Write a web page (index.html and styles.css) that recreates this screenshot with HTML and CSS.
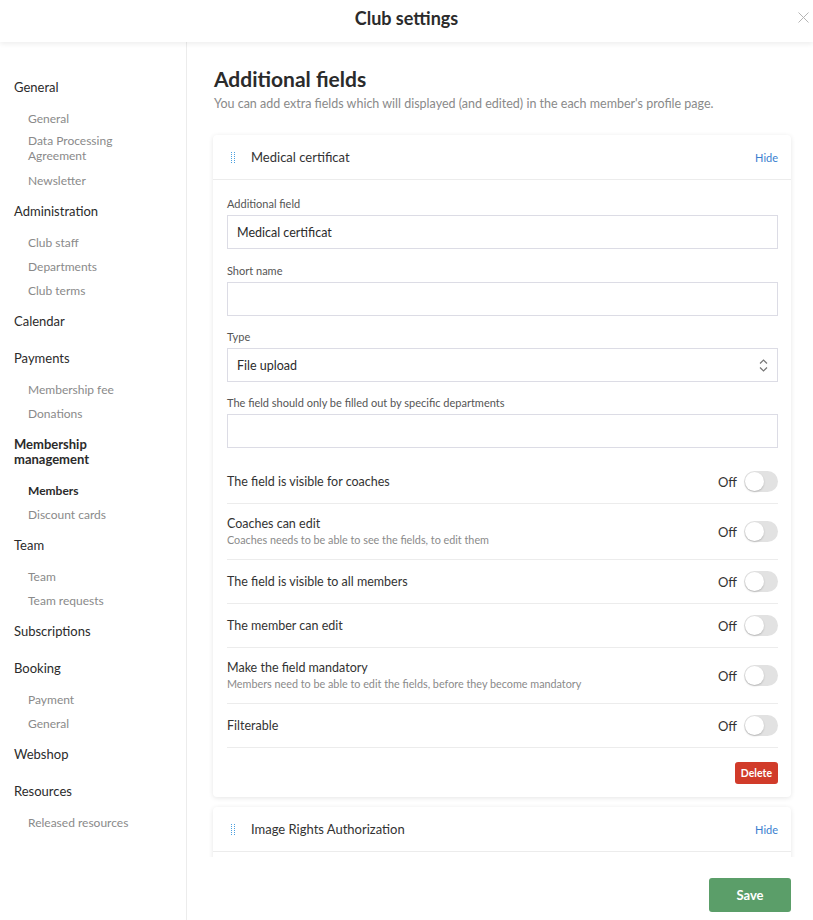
FILE: index.html
```html
<!DOCTYPE html>
<html lang="en">
<head>
    <meta charset="UTF-8">
    <meta name="viewport" content="width=device-width, initial-scale=1.0">
    <title>Club settings</title>
    <link rel="stylesheet" href="styles.css">
</head>
<body>

    <div class="modal-header">
        <div class="modal-title">Club settings</div>
        <span class="modal-close">
            <svg width="11" height="11" viewBox="0 0 11 11"><path d="M0.5 0.5 L10.5 10.5 M10.5 0.5 L0.5 10.5" stroke="#b5b5b5" stroke-width="1"/></svg>
        </span>
    </div>

    <div class="modal-body">

        <!-- left menu -->
        <div class="sidebar">
            <div class="menu-group">
                <div class="menu-heading">General</div>
                <div class="menu-list">
                    <div class="menu-item">General</div>
                    <div class="menu-item wrapped">Data Processing<br>Agreement</div>
                    <div class="menu-item">Newsletter</div>
                </div>
            </div>
            <div class="menu-group">
                <div class="menu-heading">Administration</div>
                <div class="menu-list">
                    <div class="menu-item">Club staff</div>
                    <div class="menu-item">Departments</div>
                    <div class="menu-item">Club terms</div>
                </div>
            </div>
            <div class="menu-group">
                <div class="menu-heading">Calendar</div>
            </div>
            <div class="menu-group">
                <div class="menu-heading">Payments</div>
                <div class="menu-list">
                    <div class="menu-item">Membership fee</div>
                    <div class="menu-item">Donations</div>
                </div>
            </div>
            <div class="menu-group">
                <div class="menu-heading active">Membership<br>management</div>
                <div class="menu-list">
                    <div class="menu-item active">Members</div>
                    <div class="menu-item">Discount cards</div>
                </div>
            </div>
            <div class="menu-group">
                <div class="menu-heading">Team</div>
                <div class="menu-list">
                    <div class="menu-item">Team</div>
                    <div class="menu-item">Team requests</div>
                </div>
            </div>
            <div class="menu-group">
                <div class="menu-heading">Subscriptions</div>
            </div>
            <div class="menu-group">
                <div class="menu-heading">Booking</div>
                <div class="menu-list">
                    <div class="menu-item">Payment</div>
                    <div class="menu-item">General</div>
                </div>
            </div>
            <div class="menu-group">
                <div class="menu-heading">Webshop</div>
            </div>
            <div class="menu-group">
                <div class="menu-heading">Resources</div>
                <div class="menu-list">
                    <div class="menu-item">Released resources</div>
                </div>
            </div>
        </div>

        <div class="main">
            <div class="main-scroll">
                <h1 class="page-title">Additional fields</h1>
                <div class="page-desc">You can add extra fields which will displayed (and edited) in the each member's profile page.</div>

                <div class="field-card">
                    <div class="card-header">
                        <span class="drag-handle">
                            <svg width="4" height="11" viewBox="0 0 4 11">
                                <path d="M0.5 0 V11 M3.5 0 V11" stroke="#4aa0e0" stroke-width="1" stroke-dasharray="1 1"/>
                            </svg>
                        </span>
                        <span class="card-title">Medical certificat</span>
                        <a class="hide-link">Hide</a>
                    </div>
                    <div class="card-body">
                        <div class="form-group first">
                            <label>Additional field</label>
                            <div class="text-input">Medical certificat</div>
                        </div>
                        <div class="form-group">
                            <label>Short name</label>
                            <div class="text-input"></div>
                        </div>
                        <div class="form-group">
                            <label>Type</label>
                            <div class="text-input select-input">
                                File upload
                                <svg width="9" height="13" viewBox="0 0 9 13"><path d="M1 4.5 L4.5 1 L8 4.5 M1 8.5 L4.5 12 L8 8.5" fill="none" stroke="#777" stroke-width="1.2"/></svg>
                            </div>
                        </div>
                        <div class="form-group last">
                            <label>The field should only be filled out by specific departments</label>
                            <div class="text-input"></div>
                        </div>

                        <div class="switch-row">
                            <div class="switch-text">
                                <div class="switch-label">The field is visible for coaches</div>
                            </div>
                            <span class="switch-state">Off</span>
                            <span class="toggle"></span>
                        </div>
                        <div class="switch-row">
                            <div class="switch-text">
                                <div class="switch-label">Coaches can edit</div>
                                <div class="switch-help">Coaches needs to be able to see the fields, to edit them</div>
                            </div>
                            <span class="switch-state">Off</span>
                            <span class="toggle"></span>
                        </div>
                        <div class="switch-row">
                            <div class="switch-text">
                                <div class="switch-label">The field is visible to all members</div>
                            </div>
                            <span class="switch-state">Off</span>
                            <span class="toggle"></span>
                        </div>
                        <div class="switch-row">
                            <div class="switch-text">
                                <div class="switch-label">The member can edit</div>
                            </div>
                            <span class="switch-state">Off</span>
                            <span class="toggle"></span>
                        </div>
                        <div class="switch-row">
                            <div class="switch-text">
                                <div class="switch-label">Make the field mandatory</div>
                                <div class="switch-help">Members need to be able to edit the fields, before they become mandatory</div>
                            </div>
                            <span class="switch-state">Off</span>
                            <span class="toggle"></span>
                        </div>
                        <div class="switch-row">
                            <div class="switch-text">
                                <div class="switch-label">Filterable</div>
                            </div>
                            <span class="switch-state">Off</span>
                            <span class="toggle"></span>
                        </div>

                        <div class="card-actions">
                            <button class="btn-delete">Delete</button>
                        </div>
                    </div>
                </div>

                <div class="field-card">
                    <div class="card-header">
                        <span class="drag-handle">
                            <svg width="4" height="11" viewBox="0 0 4 11">
                                <path d="M0.5 0 V11 M3.5 0 V11" stroke="#4aa0e0" stroke-width="1" stroke-dasharray="1 1"/>
                            </svg>
                        </span>
                        <span class="card-title">Image Rights Authorization</span>
                        <a class="hide-link">Hide</a>
                    </div>
                    <div class="card-body collapsed"></div>
                </div>
            </div>

            <div class="main-footer">
                <button class="btn-save">Save</button>
            </div>
        </div>
    </div>

</body>
</html>
```

FILE: styles.css
```css
* {
    box-sizing: border-box;
}

html, body {
    height: 100%;
}

body {
    margin: 0;
    font-family: Lato, 'Open Sans', sans-serif;
    color: #333;
    background-color: #fff;
    display: flex;
    flex-direction: column;
    overflow: hidden;
}

/* Top bar of the dialog */
.modal-header {
    position: relative;
    height: 42px;
    flex-shrink: 0;
    text-align: center;
    box-shadow: 0 2px 5px rgba(0, 0, 0, 0.07);
    z-index: 2;
}

.modal-title {
    font-size: 18px;
    font-weight: 700;
    line-height: 36px;
    color: #2b2b2b;
}

.modal-close {
    position: absolute;
    top: 12px;
    right: 4px;
    line-height: 0;
}

.modal-body {
    flex: 1;
    display: flex;
    min-height: 0;
}

/* Left menu */
.sidebar {
    width: 187px;
    flex-shrink: 0;
    border-right: 1px solid #ececec;
    padding-top: 27px;
}

.menu-heading {
    font-size: 13px;
    line-height: 15px;
    padding: 11px 0 11px 14px;
    color: #2b2b2b;
}

.menu-heading.active {
    font-weight: 700;
}

.menu-list {
    padding-bottom: 1px;
}

.menu-item {
    font-size: 12px;
    line-height: 15px;
    padding: 5px 0 4px 28px;
    color: #8a8a8a;
}

.menu-item.wrapped {
    line-height: 14.5px;
    padding-top: 4px;
    padding-bottom: 5px;
}

.menu-item.active {
    color: #2b2b2b;
    font-weight: 700;
}

/* Right side */
.main {
    flex: 1;
    display: flex;
    flex-direction: column;
    min-width: 0;
}

.main-scroll {
    flex: 1;
    overflow: hidden;
    padding: 24px 22px 0 26px;
}

.page-title {
    margin: 0 0 4px 1px;
    font-size: 21px;
    line-height: 26px;
    font-weight: 700;
    color: #2b2b2b;
}

.page-desc {
    margin: 0 0 23px 1px;
    font-size: 12.5px;
    line-height: 16px;
    color: #8a8a8a;
}

/* One additional field */
.field-card {
    background: #fff;
    border-radius: 4px;
    box-shadow: 0 1px 5px rgba(0, 0, 0, 0.1);
    margin-bottom: 10px;
}

.card-header {
    display: flex;
    align-items: center;
    height: 45px;
    padding: 0 13px 0 18px;
    border-bottom: 1px solid #ececec;
}

.drag-handle {
    line-height: 0;
    width: 20px;
}

.card-title {
    flex: 1;
    font-size: 13px;
}

.hide-link {
    font-size: 11px;
    color: #3a80cf;
    cursor: pointer;
}

.card-body {
    padding: 17px 13px 13px 14px;
}

.card-body.collapsed {
    height: 40px;
}

.form-group {
    margin-bottom: 14px;
}

.form-group.first {
    margin-bottom: 15px;
}

.form-group.last {
    margin-bottom: 12px;
}

.form-group label {
    display: block;
    font-size: 11px;
    line-height: 14px;
    margin-bottom: 4px;
    color: #555;
}

.text-input {
    height: 34px;
    border: 1px solid #dcdce5;
    padding: 0 9px;
    font-size: 12.5px;
    line-height: 33px;
    color: #2b2b2b;
}

.select-input {
    display: flex;
    justify-content: space-between;
    align-items: center;
}

/* Switch rows */
.switch-row {
    display: flex;
    align-items: center;
    padding: 11px 0;
    border-bottom: 1px solid #ececec;
}

.switch-text {
    flex: 1;
}

.switch-label {
    font-size: 12.5px;
    line-height: 17px;
}

.switch-help {
    font-size: 10.8px;
    line-height: 16px;
    color: #8a8a8a;
}

.switch-state {
    font-size: 13px;
    margin-right: 7px;
}

.toggle {
    position: relative;
    width: 34px;
    height: 21px;
    border-radius: 11px;
    background-color: #e2e2e2;
}

.toggle::after {
    content: "";
    position: absolute;
    left: 1px;
    top: 1px;
    width: 19px;
    height: 19px;
    border-radius: 50%;
    background: #fff;
    box-shadow: 0 1px 2px rgba(0, 0, 0, 0.2);
}

.card-actions {
    display: flex;
    justify-content: flex-end;
    padding-top: 14px;
}

.btn-delete {
    border: 0;
    border-radius: 3px;
    height: 22px;
    padding: 0 6px;
    font-family: inherit;
    font-size: 10.5px;
    font-weight: 700;
    color: #fff;
    background-color: #d13b2a;
}

/* Bottom bar with save */
.main-footer {
    height: 63px;
    flex-shrink: 0;
    display: flex;
    justify-content: flex-end;
    padding: 21px 22px 0 0;
}

.btn-save {
    width: 82px;
    height: 34px;
    border: 0;
    border-radius: 3px;
    font-family: inherit;
    font-size: 13px;
    font-weight: 700;
    color: #fff;
    background-color: #5b9e69;
}
```
